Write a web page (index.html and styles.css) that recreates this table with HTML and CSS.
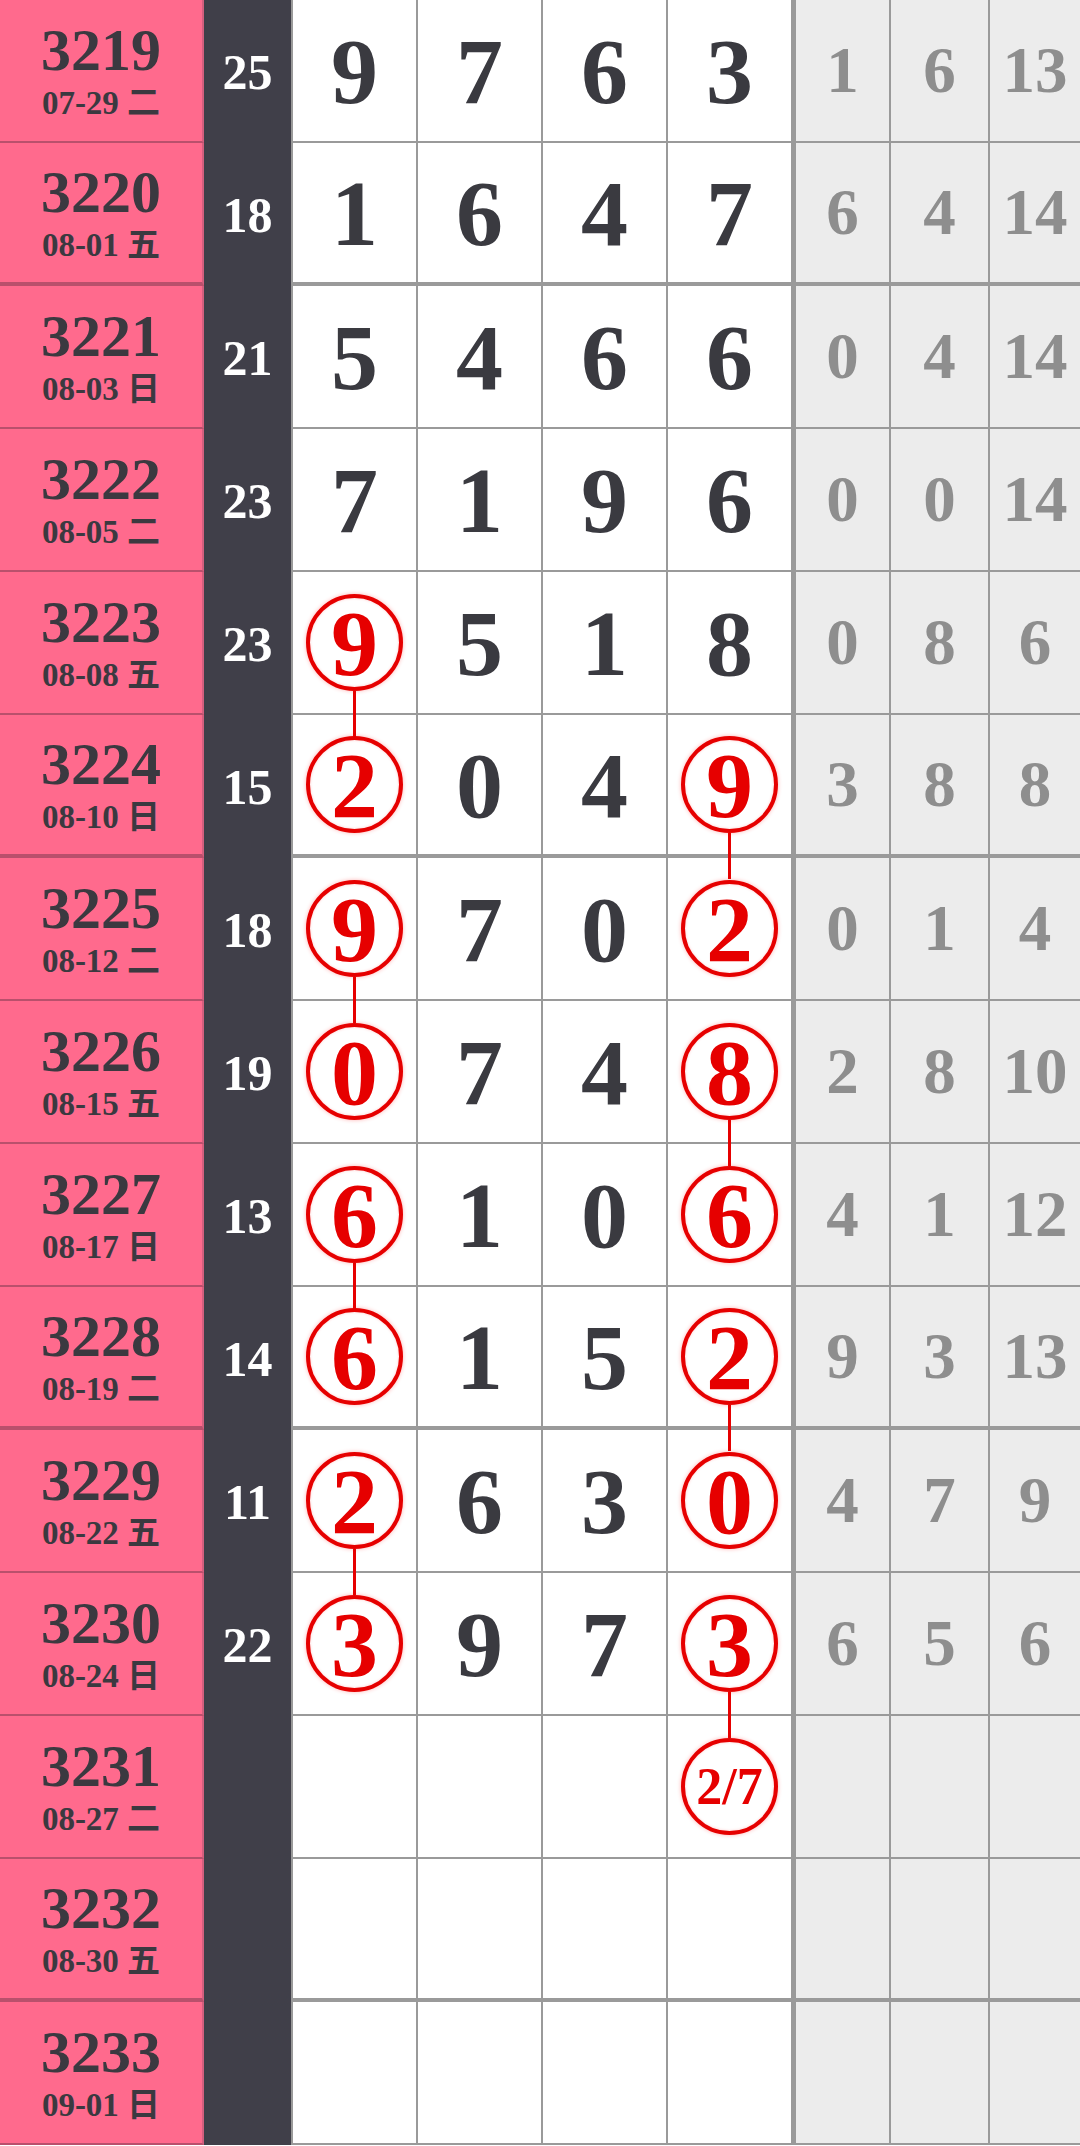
FILE: index.html
```html
<!DOCTYPE html>
<html lang="zh">
<head>
    <meta charset="UTF-8">
    <meta name="viewport" content="width=device-width, initial-scale=1.0">
    <title>走势图</title>
    <link rel="stylesheet" href="styles.css">
</head>
<body>
    <div class="chart">
        <div class="row">
            <div class="issue"><span class="no">3219</span><span class="date">07-29 二</span></div>
            <div class="sum">25</div>
            <div class="cell">9</div><div class="cell">7</div><div class="cell">6</div><div class="cell">3</div>
            <div class="cell miss first">1</div><div class="cell miss">6</div><div class="cell miss">13</div>
        </div>
        <div class="row group-end">
            <div class="issue"><span class="no">3220</span><span class="date">08-01 五</span></div>
            <div class="sum">18</div>
            <div class="cell">1</div><div class="cell">6</div><div class="cell">4</div><div class="cell">7</div>
            <div class="cell miss first">6</div><div class="cell miss">4</div><div class="cell miss">14</div>
        </div>
        <div class="row">
            <div class="issue"><span class="no">3221</span><span class="date">08-03 日</span></div>
            <div class="sum">21</div>
            <div class="cell">5</div><div class="cell">4</div><div class="cell">6</div><div class="cell">6</div>
            <div class="cell miss first">0</div><div class="cell miss">4</div><div class="cell miss">14</div>
        </div>
        <div class="row">
            <div class="issue"><span class="no">3222</span><span class="date">08-05 二</span></div>
            <div class="sum">23</div>
            <div class="cell">7</div><div class="cell">1</div><div class="cell">9</div><div class="cell">6</div>
            <div class="cell miss first">0</div><div class="cell miss">0</div><div class="cell miss">14</div>
        </div>
        <div class="row">
            <div class="issue"><span class="no">3223</span><span class="date">08-08 五</span></div>
            <div class="sum">23</div>
            <div class="cell"><span class="ring link">9</span></div><div class="cell">5</div><div class="cell">1</div><div class="cell">8</div>
            <div class="cell miss first">0</div><div class="cell miss">8</div><div class="cell miss">6</div>
        </div>
        <div class="row group-end">
            <div class="issue"><span class="no">3224</span><span class="date">08-10 日</span></div>
            <div class="sum">15</div>
            <div class="cell"><span class="ring">2</span></div><div class="cell">0</div><div class="cell">4</div><div class="cell"><span class="ring link">9</span></div>
            <div class="cell miss first">3</div><div class="cell miss">8</div><div class="cell miss">8</div>
        </div>
        <div class="row">
            <div class="issue"><span class="no">3225</span><span class="date">08-12 二</span></div>
            <div class="sum">18</div>
            <div class="cell"><span class="ring link">9</span></div><div class="cell">7</div><div class="cell">0</div><div class="cell"><span class="ring">2</span></div>
            <div class="cell miss first">0</div><div class="cell miss">1</div><div class="cell miss">4</div>
        </div>
        <div class="row">
            <div class="issue"><span class="no">3226</span><span class="date">08-15 五</span></div>
            <div class="sum">19</div>
            <div class="cell"><span class="ring">0</span></div><div class="cell">7</div><div class="cell">4</div><div class="cell"><span class="ring link">8</span></div>
            <div class="cell miss first">2</div><div class="cell miss">8</div><div class="cell miss">10</div>
        </div>
        <div class="row">
            <div class="issue"><span class="no">3227</span><span class="date">08-17 日</span></div>
            <div class="sum">13</div>
            <div class="cell"><span class="ring link">6</span></div><div class="cell">1</div><div class="cell">0</div><div class="cell"><span class="ring">6</span></div>
            <div class="cell miss first">4</div><div class="cell miss">1</div><div class="cell miss">12</div>
        </div>
        <div class="row group-end">
            <div class="issue"><span class="no">3228</span><span class="date">08-19 二</span></div>
            <div class="sum">14</div>
            <div class="cell"><span class="ring">6</span></div><div class="cell">1</div><div class="cell">5</div><div class="cell"><span class="ring link">2</span></div>
            <div class="cell miss first">9</div><div class="cell miss">3</div><div class="cell miss">13</div>
        </div>
        <div class="row">
            <div class="issue"><span class="no">3229</span><span class="date">08-22 五</span></div>
            <div class="sum">11</div>
            <div class="cell"><span class="ring link">2</span></div><div class="cell">6</div><div class="cell">3</div><div class="cell"><span class="ring">0</span></div>
            <div class="cell miss first">4</div><div class="cell miss">7</div><div class="cell miss">9</div>
        </div>
        <div class="row">
            <div class="issue"><span class="no">3230</span><span class="date">08-24 日</span></div>
            <div class="sum">22</div>
            <div class="cell"><span class="ring">3</span></div><div class="cell">9</div><div class="cell">7</div><div class="cell"><span class="ring link">3</span></div>
            <div class="cell miss first">6</div><div class="cell miss">5</div><div class="cell miss">6</div>
        </div>
        <div class="row">
            <div class="issue"><span class="no">3231</span><span class="date">08-27 二</span></div>
            <div class="sum"></div>
            <div class="cell"></div><div class="cell"></div><div class="cell"></div><div class="cell"><span class="ring small">2/7</span></div>
            <div class="cell miss first"></div><div class="cell miss"></div><div class="cell miss"></div>
        </div>
        <div class="row group-end">
            <div class="issue"><span class="no">3232</span><span class="date">08-30 五</span></div>
            <div class="sum"></div>
            <div class="cell"></div><div class="cell"></div><div class="cell"></div><div class="cell"></div>
            <div class="cell miss first"></div><div class="cell miss"></div><div class="cell miss"></div>
        </div>
        <div class="row">
            <div class="issue"><span class="no">3233</span><span class="date">09-01 日</span></div>
            <div class="sum"></div>
            <div class="cell"></div><div class="cell"></div><div class="cell"></div><div class="cell"></div>
            <div class="cell miss first"></div><div class="cell miss"></div><div class="cell miss"></div>
        </div>
    </div>
</body>
</html>
```

FILE: styles.css
```css
body {
    margin: 0;
    padding: 0;
    font-family: "Liberation Serif", "Noto Sans CJK SC", serif;
    background-color: #fff;
}
.chart {
    width: 1080px;
}
.row {
    display: grid;
    grid-template-columns: 204px 87px 125px 125px 125px 125px 98px 99px 1fr;
    height: 143px;
}
.issue {
    background-color: #ff6a8d;
    border-bottom: 2px solid #b9506c;
    border-right: 2px solid #d45f7e;
    display: flex;
    flex-direction: column;
    align-items: center;
    justify-content: center;
    padding-bottom: 1px;
    color: #3b3940;
    font-weight: bold;
    box-sizing: border-box;
}
.issue .no {
    font-size: 60px;
    line-height: 1;
}
.issue .date {
    font-size: 33px;
    line-height: 1;
    margin-top: 7px;
}
.sum {
    background-color: #403f49;
    color: #fff;
    font-weight: bold;
    font-size: 50px;
    display: flex;
    align-items: center;
    justify-content: center;
}
.cell {
    border-left: 2px solid #9a9a9a;
    border-bottom: 2px solid #9a9a9a;
    box-sizing: border-box;
    display: flex;
    align-items: center;
    justify-content: center;
    font-weight: bold;
    font-size: 94px;
    line-height: 1;
    color: #3a3a40;
}
.cell.miss {
    background-color: #ececec;
    color: #8e8e8e;
    font-size: 65px;
}
.cell.miss.first {
    border-left-width: 5px;
}
.row.group-end .cell,
.row.group-end .issue {
    border-bottom-width: 4px;
}
.ring {
    position: relative;
    width: 97px;
    height: 97px;
    box-sizing: border-box;
    border: 4px solid #e60000;
    border-radius: 50%;
    background-color: #fff;
    color: #e60000;
    display: flex;
    align-items: center;
    justify-content: center;
    box-shadow: 0 0 4px rgba(255, 0, 0, 0.3), inset 0 0 3px rgba(255, 0, 0, 0.2);
}
.ring.small {
    font-size: 52px;
}
/* connector down to the next hit in the same column */
.ring.link::after {
    content: "";
    position: absolute;
    left: 50%;
    top: calc(100% + 4px);
    width: 3px;
    margin-left: -1.5px;
    height: 46px;
    background-color: #e60000;
}
```
